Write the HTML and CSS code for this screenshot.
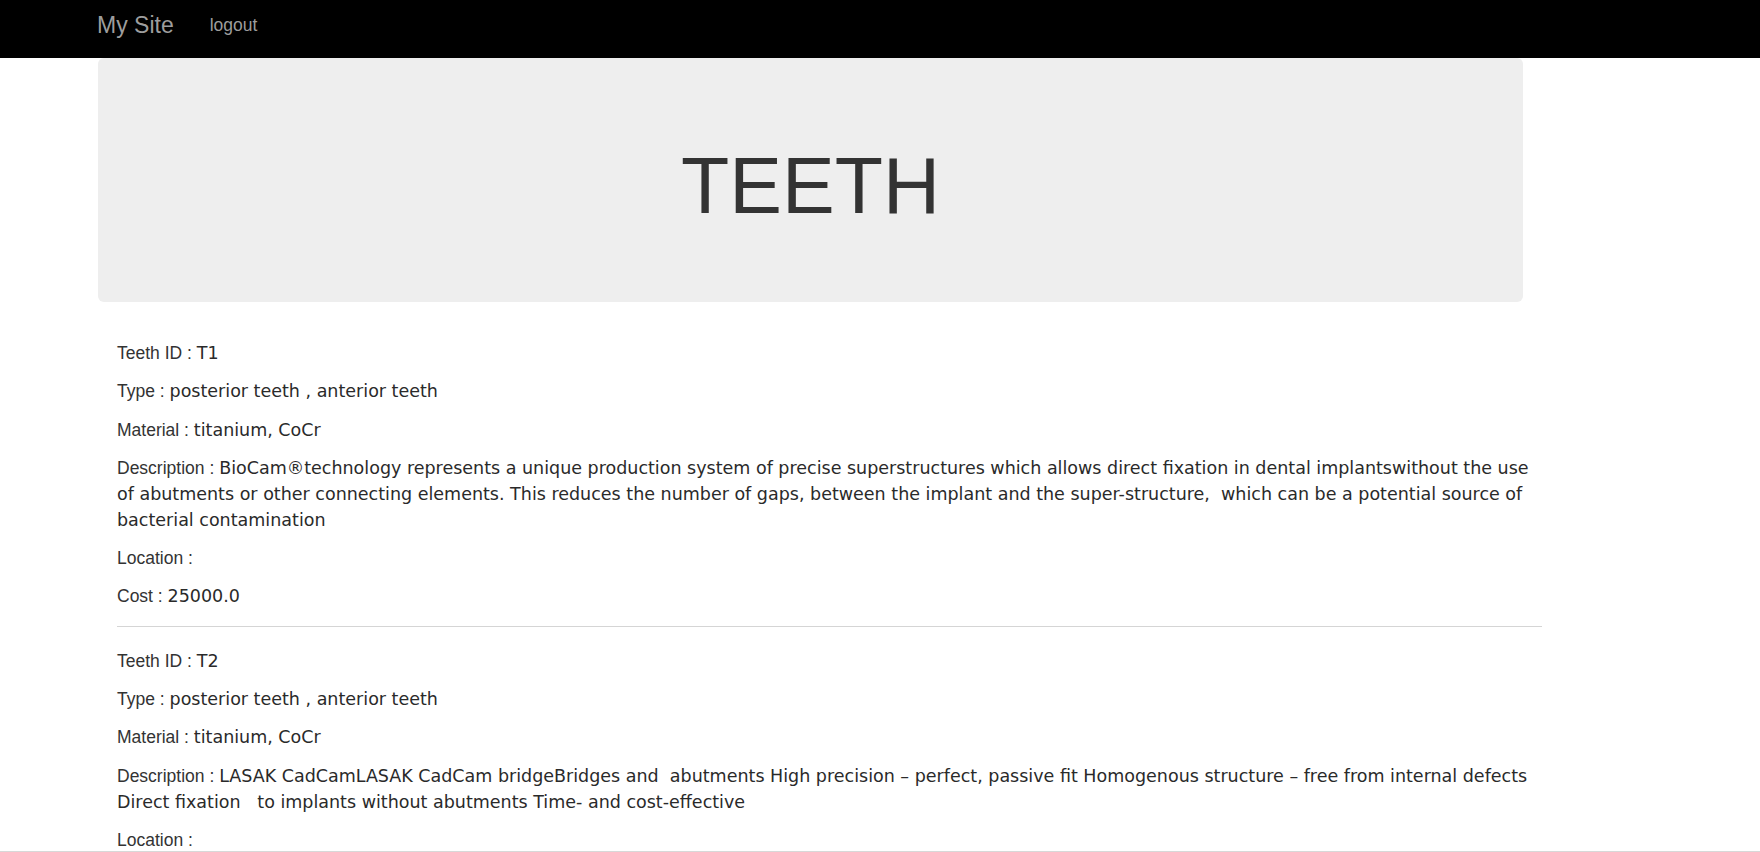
FILE: index.html
```html
<!DOCTYPE html>
<html>
<head>
<meta charset="utf-8">
<title>Teeth</title>
<link rel="stylesheet" href="styles.css">
</head>
<body>
<nav class="navbar">
  <div class="nav-inner">
    <a class="brand" href="#">My Site</a>
    <a class="nav-link" href="#">logout</a>
  </div>
</nav>
<div class="jumbotron">
  <h1 class="title">TEETH</h1>
</div>
<div class="content">
  <div class="item">
    <p><span class="label">Teeth ID : </span><span class="value">T1</span></p>
    <p><span class="label">Type : </span><span class="value">posterior teeth , anterior teeth</span></p>
    <p><span class="label">Material : </span><span class="value">titanium, CoCr</span></p>
    <p><span class="label">Description : </span><span class="value">BioCam®technology represents a unique production system of precise superstructures which allows direct fixation in dental implantswithout the use of abutments or other connecting elements. This reduces the number of gaps, between the implant and the super-structure,&nbsp; which can be a potential source of bacterial contamination</span></p>
    <p><span class="label">Location : </span><span class="value"></span></p>
    <p><span class="label">Cost : </span><span class="value">25000.0</span></p>
  </div>
  <hr class="sep">
  <div class="item">
    <p><span class="label">Teeth ID : </span><span class="value">T2</span></p>
    <p><span class="label">Type : </span><span class="value">posterior teeth , anterior teeth</span></p>
    <p><span class="label">Material : </span><span class="value">titanium, CoCr</span></p>
    <p><span class="label">Description : </span><span class="value">LASAK CadCamLASAK CadCam bridgeBridges and&nbsp; abutments High precision – perfect, passive fit Homogenous structure – free from internal defects Direct fixation &nbsp; to implants without abutments Time- and cost-effective</span></p>
    <p><span class="label">Location : </span><span class="value"></span></p>
    <p><span class="label">Cost : </span><span class="value">30000.0</span></p>
  </div>
</div>
<div class="bottom-edge"></div>
</body>
</html>
```
FILE: styles.css
```css
html, body {
  margin: 0;
  padding: 0;
  overflow: hidden;
}
body {
  font-family: "Liberation Sans", Arial, sans-serif;
  font-size: 17.5px;
  line-height: 1.42857;
  color: #333;
  background: #fff;
}
.navbar {
  background: #000;
  height: 58px;
}
.nav-inner {
  display: flex;
  align-items: flex-start;
  padding-left: 97px;
}
.brand {
  font-size: 23px;
  line-height: 23px;
  margin-top: 14px;
  color: #9d9d9d;
  text-decoration: none;
}
.nav-link {
  font-size: 17.5px;
  line-height: 17.5px;
  margin-top: 17px;
  margin-left: 36px;
  color: #9d9d9d;
  text-decoration: none;
}
.jumbotron {
  margin-left: 98px;
  width: 1425px;
  box-sizing: border-box;
  height: 244px;
  padding-top: 85px;
  background: #eee;
  border-radius: 6px;
  text-align: center;
}
.title {
  margin: 0;
  font-size: 79px;
  line-height: 1.1;
  font-weight: 400;
  color: #333;
}
.content {
  margin-left: 117px;
  width: 1425px;
  padding-top: 39px;
}
.item p {
  margin: 0 0 12.4px;
  line-height: 25.9px;
}
.value {
  font-family: "DejaVu Sans", Verdana, sans-serif;
  color: #2a2a2a;
}
.sep {
  margin: 16px 0 21.5px;
  border: 0;
  border-top: 1px solid #d5d5d5;
  height: 0;
}
.bottom-edge {
  position: fixed;
  left: 0;
  right: 0;
  bottom: 0;
  height: 1px;
  background: #d8d8d8;
}
```
